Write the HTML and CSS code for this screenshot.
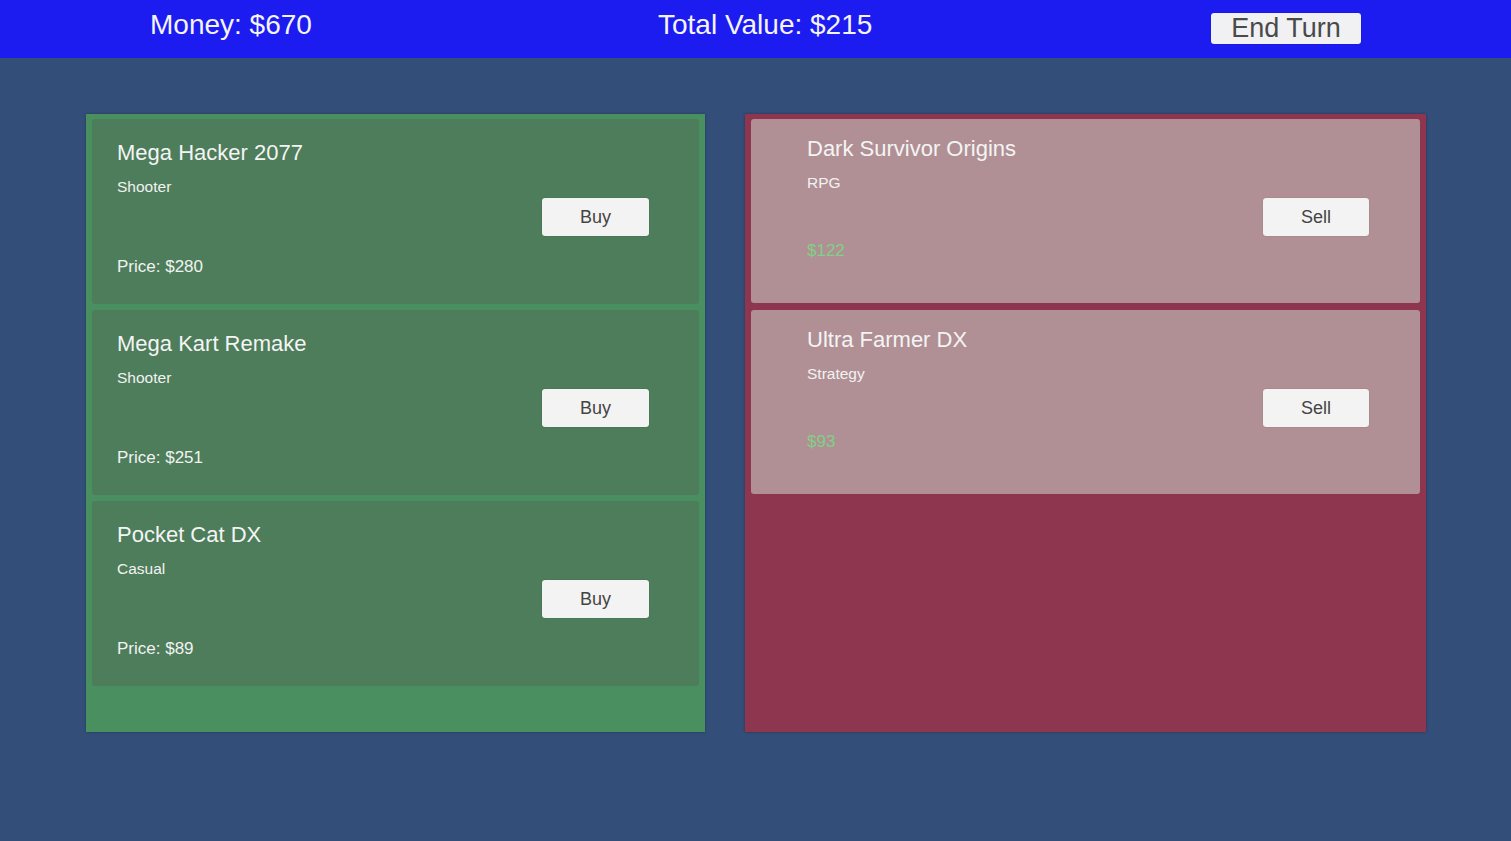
FILE: index.html
```html
<!DOCTYPE html>
<html lang="en">
<head>
<meta charset="utf-8">
<title>Game Market</title>
<link rel="stylesheet" href="styles.css">
</head>
<body>
<header class="topbar">
  <div class="stat">Money: $670</div>
  <div class="stat">Total Value: $215</div>
  <div class="end-cell"><button class="end-turn">End Turn</button></div>
</header>
<main class="board">
  <section class="panel panel-shop">
    <div class="card card-shop">
      <div class="info">
        <div class="title">Mega Hacker 2077</div>
        <div class="genre">Shooter</div>
        <div class="price">Price: $280</div>
      </div>
      <button class="action">Buy</button>
    </div>
    <div class="card card-shop">
      <div class="info">
        <div class="title">Mega Kart Remake</div>
        <div class="genre">Shooter</div>
        <div class="price">Price: $251</div>
      </div>
      <button class="action">Buy</button>
    </div>
    <div class="card card-shop">
      <div class="info">
        <div class="title">Pocket Cat DX</div>
        <div class="genre">Casual</div>
        <div class="price">Price: $89</div>
      </div>
      <button class="action">Buy</button>
    </div>
  </section>
  <section class="panel panel-owned">
    <div class="card card-owned">
      <div class="info">
        <div class="title">Dark Survivor Origins</div>
        <div class="genre">RPG</div>
        <div class="price value">$122</div>
      </div>
      <button class="action">Sell</button>
    </div>
    <div class="card card-owned">
      <div class="info">
        <div class="title">Ultra Farmer DX</div>
        <div class="genre">Strategy</div>
        <div class="price value">$93</div>
      </div>
      <button class="action">Sell</button>
    </div>
  </section>
</main>
</body>
</html>
```
FILE: styles.css
```css
* { box-sizing: border-box; }

html, body {
  margin: 0;
  padding: 0;
}

body {
  width: 1511px;
  height: 841px;
  overflow: hidden;
  background: #324e79;
  font-family: "Liberation Sans", Arial, sans-serif;
  color: #f2f2f2;
}

.topbar {
  height: 58px;
  background: #1c1cf1;
  display: grid;
  grid-template-columns: 508px 553px 150px;
  padding-left: 150px;
  align-items: start;
  padding-top: 9px;
}

.stat {
  font-size: 28px;
  line-height: 32px;
  color: #f4f4fa;
  white-space: nowrap;
}

.end-cell {
  padding-top: 4px;
}

.end-turn {
  width: 150px;
  height: 31px;
  padding: 0;
  border: none;
  border-radius: 3px;
  background: #f1f1f4;
  color: #4a4a4a;
  font-family: "Liberation Sans", Arial, sans-serif;
  font-size: 27px;
  line-height: 31px;
  box-shadow: 0 0 1px rgba(0,0,0,0.4);
}

.board {
  display: flex;
  align-items: flex-start;
  gap: 40px;
  padding-top: 56px;
  padding-left: 86px;
}

.panel {
  height: 618px;
  display: flex;
  flex-direction: column;
  gap: 6px;
  padding: 5px 6px;
}

.panel-shop {
  width: 619px;
  background: #4a8f5f;
  box-shadow: 0 0 2px rgba(20,40,30,0.5);
}

.panel-owned {
  width: 681px;
  background: #8e3650;
  box-shadow: 0 0 2px rgba(60,20,30,0.6);
  gap: 7px;
}

.card {
  height: 185px;
  display: flex;
  justify-content: space-between;
  align-items: flex-start;
  border-radius: 3px;
}

.card-shop {
  background: #4d7d5a;
  padding: 21px 50px 0 25px;
}

.card-owned {
  background: #b09095;
  padding: 17px 51px 0 56px;
  height: 184px;
}

.info {
  display: flex;
  flex-direction: column;
}

.title {
  font-size: 22px;
  line-height: 26px;
  color: #f4f4f4;
}

.genre {
  margin-top: 12px;
  font-size: 15.5px;
  line-height: 18px;
  color: #f2f2f2;
}

.price {
  margin-top: 61px;
  font-size: 17px;
  line-height: 20px;
  color: #f2f2f2;
}

.card-owned .price {
  margin-top: 49px;
}

.value {
  color: #80d184;
}

.action {
  width: 107px;
  height: 38px;
  padding: 0;
  border: none;
  border-radius: 3px;
  background: #f3f3f3;
  color: #444444;
  font-family: "Liberation Sans", Arial, sans-serif;
  font-size: 18px;
  line-height: 38px;
  box-shadow: 0 0 1px rgba(0,0,0,0.35);
}

.card-shop .action {
  margin-top: 58px;
}

.card-owned .action {
  width: 106px;
  margin-top: 62px;
}
```
